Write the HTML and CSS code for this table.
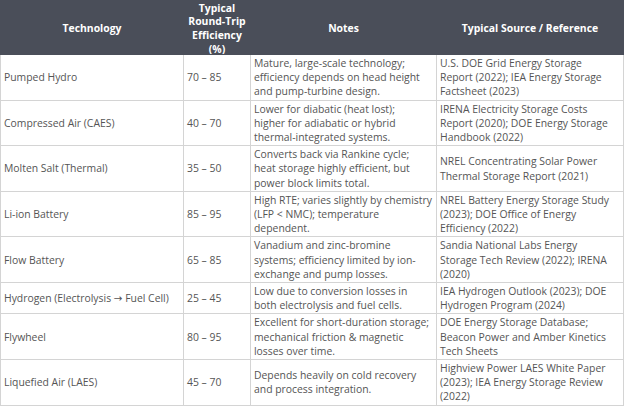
FILE: index.html
```html
<!DOCTYPE html>
<html>
<head>
<meta charset="utf-8">
<link rel="stylesheet" href="styles.css">
</head>
<body>
<table class="rte">
  <colgroup>
    <col class="c-tech"><col class="c-eff"><col class="c-notes"><col class="c-src">
  </colgroup>
  <thead>
    <tr>
      <th><div class="hcell">Technology</div></th>
      <th><div class="hcell">Typical<br>Round-Trip<br>Efficiency<br>(%)</div></th>
      <th><div class="hcell">Notes</div></th>
      <th><div class="hcell">Typical Source / Reference</div></th>
    </tr>
  </thead>
  <tbody>
    <tr><td>Pumped Hydro</td><td>70 – 85</td><td>Mature, large-scale technology;<br>efficiency depends on head height<br>and pump-turbine design.</td><td>U.S. DOE Grid Energy Storage<br>Report (2022); IEA Energy Storage<br>Factsheet (2023)</td></tr>
    <tr><td>Compressed Air (CAES)</td><td>40 – 70</td><td>Lower for diabatic (heat lost);<br>higher for adiabatic or hybrid<br>thermal-integrated systems.</td><td>IRENA Electricity Storage Costs<br>Report (2020); DOE Energy Storage<br>Handbook (2022)</td></tr>
    <tr><td>Molten Salt (Thermal)</td><td>35 – 50</td><td>Converts back via Rankine cycle;<br>heat storage highly efficient, but<br>power block limits total.</td><td>NREL Concentrating Solar Power<br>Thermal Storage Report (2021)</td></tr>
    <tr><td>Li-ion Battery</td><td>85 – 95</td><td>High RTE; varies slightly by chemistry<br>(LFP &lt; NMC); temperature<br>dependent.</td><td>NREL Battery Energy Storage Study<br>(2023); DOE Office of Energy<br>Efficiency (2022)</td></tr>
    <tr><td>Flow Battery</td><td>65 – 85</td><td>Vanadium and zinc-bromine<br>systems; efficiency limited by ion-<br>exchange and pump losses.</td><td>Sandia National Labs Energy<br>Storage Tech Review (2022); IRENA<br>(2020)</td></tr>
    <tr><td>Hydrogen (Electrolysis → Fuel Cell)</td><td>25 – 45</td><td>Low due to conversion losses in<br>both electrolysis and fuel cells.</td><td>IEA Hydrogen Outlook (2023); DOE<br>Hydrogen Program (2024)</td></tr>
    <tr><td>Flywheel</td><td>80 – 95</td><td>Excellent for short-duration storage;<br>mechanical friction &amp; magnetic<br>losses over time.</td><td>DOE Energy Storage Database;<br>Beacon Power and Amber Kinetics<br>Tech Sheets</td></tr>
    <tr><td>Liquefied Air (LAES)</td><td>45 – 70</td><td>Depends heavily on cold recovery<br>and process integration.</td><td>Highview Power LAES White Paper<br>(2023); IEA Energy Storage Review<br>(2022)</td></tr>
  </tbody>
</table>
</body>
</html>
```

FILE: styles.css
```css
html, body {
  margin: 0;
  padding: 0;
  background: #ffffff;
}
.rte {
  border-collapse: collapse;
  table-layout: fixed;
  width: 623px;
  font-family: "Open Sans", "DejaVu Sans", sans-serif;
  font-size: 10.4px;
  color: #555555;
}
.c-tech { width: 183px; }
.c-eff { width: 67px; }
.c-notes { width: 186px; }
.c-src { width: 187px; }
.rte th {
  background: #4a4e59;
  color: #ffffff;
  font-weight: 700;
  padding: 0;
  height: 53px;
  border: 1px solid #4a4e59;
  vertical-align: middle;
}
.hcell {
  height: 53px;
  overflow: hidden;
  display: flex;
  align-items: center;
  justify-content: center;
  text-align: center;
  line-height: 13.7px;
  padding-top: 3px;
  box-sizing: border-box;
}
.rte td {
  border: 1px solid #d4d4d4;
  padding: 1px 0 1px 3px;
  line-height: 14.2px;
  vertical-align: middle;
  text-align: left;
  white-space: nowrap;
  overflow: hidden;
}
```
